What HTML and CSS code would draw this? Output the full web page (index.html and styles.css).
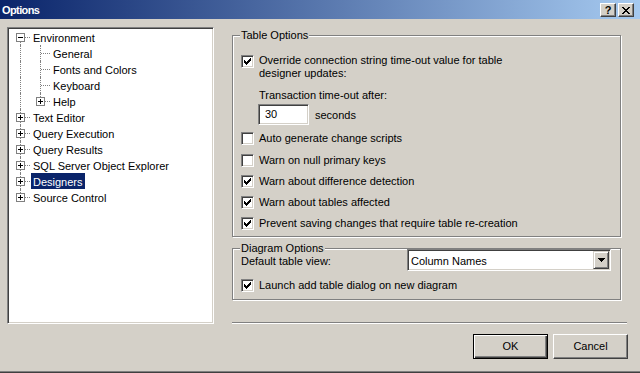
FILE: index.html
```html
<!DOCTYPE html>
<html>
<head>
<meta charset="utf-8">
<link rel="stylesheet" href="styles.css">
</head>
<body>
<div class="window">
  <div class="titlebar">
    <span class="title">Options</span>
    <div class="caption-btns">
      <span class="cbtn help">?</span>
      <span class="cbtn close"><svg width="8" height="7" viewBox="0 0 8 7" shape-rendering="crispEdges"><path d="M0 0h2v1h-2z M6 0h2v1h-2z M1 1h2v1h-2z M5 1h2v1h-2z M2 2h4v1h-4z M3 3h2v1h-2z M2 4h4v1h-4z M1 5h2v1h-2z M5 5h2v1h-2z M0 6h2v1h-2z M6 6h2v1h-2z" fill="#000"/></svg></span>
    </div>
  </div>
  <div class="main">
    <div class="tree">
      <div class="row"><span class="cell first"><span class="exp"></span></span><span class="label">Environment</span></div>
      <div class="row"><span class="cell vline"></span><span class="cell tee"></span><span class="label">General</span></div>
      <div class="row"><span class="cell vline"></span><span class="cell tee"></span><span class="label">Fonts and Colors</span></div>
      <div class="row"><span class="cell vline"></span><span class="cell tee"></span><span class="label">Keyboard</span></div>
      <div class="row"><span class="cell vline"></span><span class="cell end"><span class="exp plus"></span></span><span class="label">Help</span></div>
      <div class="row"><span class="cell tee"><span class="exp plus"></span></span><span class="label">Text Editor</span></div>
      <div class="row"><span class="cell tee"><span class="exp plus"></span></span><span class="label">Query Execution</span></div>
      <div class="row"><span class="cell tee"><span class="exp plus"></span></span><span class="label">Query Results</span></div>
      <div class="row"><span class="cell tee"><span class="exp plus"></span></span><span class="label">SQL Server Object Explorer</span></div>
      <div class="row"><span class="cell tee"><span class="exp plus"></span></span><span class="label selected">Designers</span></div>
      <div class="row"><span class="cell end"><span class="exp plus"></span></span><span class="label">Source Control</span></div>
    </div>
    <div class="content">
      <div class="group table-group">
        <span class="caption">Table Options</span>
        <div class="check-row first-check">
          <span class="checkbox checked"><svg width="7" height="7" viewBox="0 0 7 7" shape-rendering="crispEdges"><path d="M6 0h1v1h-1z M5 1h2v1h-2z M0 2h1v1h-1z M4 2h3v1h-3z M0 3h2v1h-2z M3 3h3v1h-3z M0 4h5v1h-5z M1 5h3v1h-3z M2 6h1v1h-1z" fill="#000"/></svg></span>
          <span class="check-label">Override connection string time-out value for table<br>designer updates:</span>
        </div>
        <div class="sub-label">Transaction time-out after:</div>
        <div class="timeout-row">
          <span class="textbox">30</span>
          <span class="unit">seconds</span>
        </div>
        <div class="check-row gap-first">
          <span class="checkbox"></span>
          <span class="check-label">Auto generate change scripts</span>
        </div>
        <div class="check-row gap-wide">
          <span class="checkbox"></span>
          <span class="check-label">Warn on null primary keys</span>
        </div>
        <div class="check-row gap">
          <span class="checkbox checked"><svg width="7" height="7" viewBox="0 0 7 7" shape-rendering="crispEdges"><path d="M6 0h1v1h-1z M5 1h2v1h-2z M0 2h1v1h-1z M4 2h3v1h-3z M0 3h2v1h-2z M3 3h3v1h-3z M0 4h5v1h-5z M1 5h3v1h-3z M2 6h1v1h-1z" fill="#000"/></svg></span>
          <span class="check-label">Warn about difference detection</span>
        </div>
        <div class="check-row gap">
          <span class="checkbox checked"><svg width="7" height="7" viewBox="0 0 7 7" shape-rendering="crispEdges"><path d="M6 0h1v1h-1z M5 1h2v1h-2z M0 2h1v1h-1z M4 2h3v1h-3z M0 3h2v1h-2z M3 3h3v1h-3z M0 4h5v1h-5z M1 5h3v1h-3z M2 6h1v1h-1z" fill="#000"/></svg></span>
          <span class="check-label">Warn about tables affected</span>
        </div>
        <div class="check-row gap">
          <span class="checkbox checked"><svg width="7" height="7" viewBox="0 0 7 7" shape-rendering="crispEdges"><path d="M6 0h1v1h-1z M5 1h2v1h-2z M0 2h1v1h-1z M4 2h3v1h-3z M0 3h2v1h-2z M3 3h3v1h-3z M0 4h5v1h-5z M1 5h3v1h-3z M2 6h1v1h-1z" fill="#000"/></svg></span>
          <span class="check-label">Prevent saving changes that require table re-creation</span>
        </div>
      </div>
      <div class="group diagram-group">
        <span class="caption">Diagram Options</span>
        <div class="view-row">
          <span class="view-label">Default table view:</span>
          <div class="combo">
            <span class="combo-text">Column Names</span>
            <span class="combo-btn"><svg width="7" height="4" viewBox="0 0 7 4" shape-rendering="crispEdges"><path d="M0 0h7v1h-7z M1 1h5v1h-5z M2 2h3v1h-3z M3 3h1v1h-1z" fill="#000"/></svg></span>
          </div>
        </div>
        <div class="check-row launch">
          <span class="checkbox checked"><svg width="7" height="7" viewBox="0 0 7 7" shape-rendering="crispEdges"><path d="M6 0h1v1h-1z M5 1h2v1h-2z M0 2h1v1h-1z M4 2h3v1h-3z M0 3h2v1h-2z M3 3h3v1h-3z M0 4h5v1h-5z M1 5h3v1h-3z M2 6h1v1h-1z" fill="#000"/></svg></span>
          <span class="check-label">Launch add table dialog on new diagram</span>
        </div>
      </div>
      <div class="separator"></div>
    </div>
  </div>
  <div class="footer">
    <span class="button default">OK</span>
    <span class="button">Cancel</span>
  </div>
</div>
</body>
</html>
```

FILE: styles.css
```css
html, body {
  margin: 0;
  padding: 0;
}
body {
  width: 640px;
  height: 373px;
  overflow: hidden;
  background: #d4d0c8;
  font-family: "Liberation Sans", Arial, sans-serif;
  font-size: 11px;
  color: #000;
}
.window {
  height: 373px;
  box-sizing: border-box;
  border-bottom: 1px solid #404040;
  box-shadow: inset 0 -1px 0 #808080;
  display: flex;
  flex-direction: column;
}
.titlebar {
  height: 19px;
  flex: none;
  background: linear-gradient(to right, #0a246a, #a6caf0);
  display: flex;
  align-items: center;
  justify-content: space-between;
  padding: 0 6px 0 2px;
}
.title {
  color: #fff;
  font-weight: bold;
  font-size: 11px;
  letter-spacing: -0.6px;
  line-height: 14px;
}
.caption-btns {
  display: flex;
  gap: 2px;
  margin-top: 1px;
}
.cbtn {
  width: 16px;
  height: 14px;
  box-sizing: border-box;
  background: #d4d0c8;
  border: 1px solid;
  border-color: #fff #404040 #404040 #fff;
  box-shadow: inset -1px -1px 0 #808080;
  display: flex;
  align-items: center;
  justify-content: center;
}
.cbtn.help {
  font-weight: bold;
  font-size: 11px;
  line-height: 12px;
}
.main {
  display: flex;
  padding: 8px 0 0 7px;
  height: 297px;
  flex: none;
}
.tree {
  width: 207px;
  height: 297px;
  box-sizing: border-box;
  background: #fff;
  border: 1px solid;
  border-color: #808080 #fff #fff #808080;
  box-shadow: inset 1px 1px 0 #404040, inset -1px -1px 0 #d4d0c8;
  padding: 1px 0 0 1px;
}
.row {
  display: flex;
  height: 16px;
  margin-left: 1px;
}
.cell {
  position: relative;
  width: 20px;
  height: 16px;
  flex: none;
}
.cell::before,
.cell::after {
  content: "";
  position: absolute;
}
.vline::before,
.tee::before {
  left: 10px;
  top: 0;
  height: 16px;
  border-left: 1px dotted #808080;
}
.end::before {
  left: 10px;
  top: 0;
  height: 8px;
  border-left: 1px dotted #808080;
}
.first::before {
  left: 10px;
  top: 8px;
  height: 8px;
  border-left: 1px dotted #808080;
}
.tee::after,
.end::after,
.first::after {
  left: 11px;
  top: 8px;
  width: 9px;
  border-top: 1px dotted #808080;
}
.exp {
  position: absolute;
  left: 6px;
  top: 4px;
  width: 9px;
  height: 9px;
  box-sizing: border-box;
  border: 1px solid #808080;
  background: #fff;
  z-index: 1;
}
.exp::before {
  content: "";
  position: absolute;
  left: 1px;
  top: 3px;
  width: 5px;
  height: 1px;
  background: #000;
}
.exp.plus::after {
  content: "";
  position: absolute;
  left: 3px;
  top: 1px;
  width: 1px;
  height: 5px;
  background: #000;
}
.label {
  margin-left: 1px;
  padding: 0 2px;
  line-height: 18px;
  height: 16px;
  overflow: hidden;
  white-space: nowrap;
}
.label.selected {
  background: #0a246a;
  color: #fff;
}
.content {
  margin-left: 18px;
  width: 395px;
  display: flex;
  flex-direction: column;
  padding-top: 8px;
  box-sizing: border-box;
}
.group {
  position: relative;
  width: 389px;
  box-sizing: border-box;
  border: 1px solid #808080;
  box-shadow: 1px 1px 0 #fff, inset 1px 1px 0 #fff;
  padding: 0 8px;
}
.caption {
  position: absolute;
  left: 7px;
  top: -7px;
  padding: 0 1px;
  line-height: 13px;
  background: #d4d0c8;
}
.table-group {
  padding-top: 18px;
  padding-bottom: 6px;
}
.check-row {
  display: flex;
  align-items: flex-start;
  line-height: 13px;
}
.check-label {
  margin-left: 5px;
  white-space: nowrap;
}
.checkbox {
  width: 13px;
  height: 13px;
  flex: none;
  box-sizing: border-box;
  background: #fff;
  border: 1px solid;
  border-color: #808080 #fff #fff #808080;
  box-shadow: inset 1px 1px 0 #404040, inset -1px -1px 0 #d4d0c8;
  display: flex;
  align-items: center;
  justify-content: center;
}
.first-check .checkbox {
  margin-top: 1px;
  margin-bottom: -1px;
}
.sub-label {
  margin: 9px 0 0 18px;
  line-height: 13px;
}
.timeout-row {
  display: flex;
  align-items: center;
  margin: 2px 0 0 17px;
}
.textbox {
  width: 51px;
  height: 21px;
  box-sizing: border-box;
  background: #fff;
  border: 1px solid;
  border-color: #808080 #fff #fff #808080;
  box-shadow: inset 1px 1px 0 #404040, inset -1px -1px 0 #d4d0c8;
  padding-left: 6px;
  line-height: 19px;
}
.unit {
  margin-left: 6px;
  margin-top: 1px;
}
.gap-first {
  margin-top: 7px;
}
.gap-wide {
  margin-top: 9px;
}
.gap {
  margin-top: 8px;
}
.diagram-group {
  margin-top: 11px;
  padding-top: 0;
  padding-bottom: 7px;
  padding-right: 9px;
}
.view-row {
  display: flex;
  justify-content: space-between;
  align-items: flex-start;
}
.view-label {
  margin-top: 6px;
  line-height: 13px;
}
.combo {
  width: 204px;
  height: 22px;
  box-sizing: border-box;
  background: #fff;
  border: 1px solid;
  border-color: #808080 #fff #fff #808080;
  box-shadow: inset 1px 1px 0 #404040, inset -1px -1px 0 #d4d0c8;
  display: flex;
  align-items: center;
  justify-content: space-between;
  padding: 1px 1px 1px 3px;
}
.combo-text {
  line-height: 13px;
  margin-top: 2px;
}
.combo-btn {
  width: 16px;
  height: 18px;
  box-sizing: border-box;
  background: #d4d0c8;
  border: 1px solid;
  border-color: #d4d0c8 #404040 #404040 #d4d0c8;
  box-shadow: inset 1px 1px 0 #fff, inset -1px -1px 0 #808080;
  display: flex;
  align-items: center;
  justify-content: center;
}
.launch {
  margin-top: 8px;
}
.separator {
  margin-top: auto;
  height: 1px;
  border-top: 1px solid #808080;
  background: #fff;
}
.footer {
  display: flex;
  justify-content: flex-end;
  gap: 5px;
  padding-right: 12px;
  margin-top: 10px;
}
.button {
  width: 75px;
  height: 25px;
  box-sizing: border-box;
  border: 1px solid;
  border-color: #fff #404040 #404040 #fff;
  box-shadow: inset -1px -1px 0 #808080;
  display: flex;
  align-items: center;
  justify-content: center;
  line-height: 13px;
}
.button.default {
  border: 1px solid #000;
  box-shadow: inset 1px 1px 0 #fff, inset -1px -1px 0 #404040, inset -2px -2px 0 #808080;
}
```
